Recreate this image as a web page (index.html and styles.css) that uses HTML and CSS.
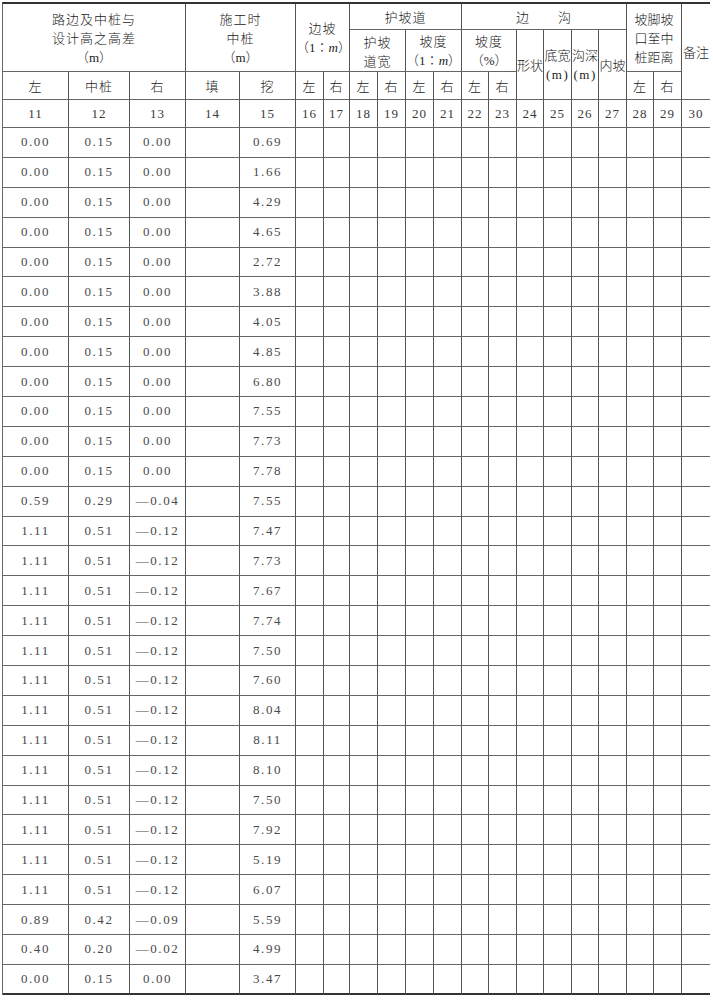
FILE: index.html
```html
<!DOCTYPE html>
<html lang="zh-CN">
<head>
<meta charset="utf-8">
<title>路基设计表</title>
<link rel="stylesheet" href="styles.css">
</head>
<body>
<div class="page">
<table class="sheet">
<colgroup>
<col style="width:66px"><col style="width:61px"><col style="width:56px"><col style="width:54px"><col style="width:56px">
<col style="width:28px"><col style="width:26px"><col style="width:28px"><col style="width:28px"><col style="width:28px">
<col style="width:28px"><col style="width:27px"><col style="width:28px"><col style="width:27px"><col style="width:28px">
<col style="width:27px"><col style="width:28px"><col style="width:27px"><col style="width:28px"><col style="width:28px">
</colgroup>
<thead>
<tr class="ha">
<th rowspan="2" colspan="3">路边及中桩与<br>设计高之高差<br><span class="u">（m）</span></th>
<th rowspan="2" colspan="2">施工时<br>中桩<br><span class="u">（m）</span></th>
<th rowspan="2" colspan="2">边坡<br><span class="u">（1∶<i>m</i>）</span></th>
<th colspan="4">护坡道</th>
<th colspan="6">边　　沟</th>
<th rowspan="2" colspan="2" class="tight">坡脚坡<br>口至中<br>桩距离</th>
<th rowspan="3" class="tight end">备注</th>
</tr>
<tr class="hb">
<th colspan="2">护坡<br>道宽</th>
<th colspan="2">坡度<br><span class="u">（1∶<i>m</i>）</span></th>
<th colspan="2">坡度<br><span class="u">（%）</span></th>
<th rowspan="2" class="tight">形状</th>
<th rowspan="2" class="tight">底宽<br><span class="un">(m)</span></th>
<th rowspan="2" class="tight">沟深<br><span class="un">(m)</span></th>
<th rowspan="2" class="tight">内坡</th>
</tr>
<tr class="hc">
<th>左</th><th>中桩</th><th>右</th><th>填</th><th>挖</th>
<th>左</th><th>右</th><th>左</th><th>右</th><th>左</th><th>右</th><th>左</th><th>右</th>
<th>左</th><th>右</th>
</tr>
<tr class="num">
<td>11</td><td>12</td><td>13</td><td>14</td><td>15</td><td>16</td><td>17</td><td>18</td><td>19</td><td>20</td>
<td>21</td><td>22</td><td>23</td><td>24</td><td>25</td><td>26</td><td>27</td><td>28</td><td>29</td><td class="end">30</td>
</tr>
</thead>
<tbody>
<tr><td>0.00</td><td>0.15</td><td>0.00</td><td></td><td>0.69</td><td></td><td></td><td></td><td></td><td></td><td></td><td></td><td></td><td></td><td></td><td></td><td></td><td></td><td></td><td class="end"></td></tr>
<tr><td>0.00</td><td>0.15</td><td>0.00</td><td></td><td>1.66</td><td></td><td></td><td></td><td></td><td></td><td></td><td></td><td></td><td></td><td></td><td></td><td></td><td></td><td></td><td class="end"></td></tr>
<tr><td>0.00</td><td>0.15</td><td>0.00</td><td></td><td>4.29</td><td></td><td></td><td></td><td></td><td></td><td></td><td></td><td></td><td></td><td></td><td></td><td></td><td></td><td></td><td class="end"></td></tr>
<tr><td>0.00</td><td>0.15</td><td>0.00</td><td></td><td>4.65</td><td></td><td></td><td></td><td></td><td></td><td></td><td></td><td></td><td></td><td></td><td></td><td></td><td></td><td></td><td class="end"></td></tr>
<tr><td>0.00</td><td>0.15</td><td>0.00</td><td></td><td>2.72</td><td></td><td></td><td></td><td></td><td></td><td></td><td></td><td></td><td></td><td></td><td></td><td></td><td></td><td></td><td class="end"></td></tr>
<tr><td>0.00</td><td>0.15</td><td>0.00</td><td></td><td>3.88</td><td></td><td></td><td></td><td></td><td></td><td></td><td></td><td></td><td></td><td></td><td></td><td></td><td></td><td></td><td class="end"></td></tr>
<tr><td>0.00</td><td>0.15</td><td>0.00</td><td></td><td>4.05</td><td></td><td></td><td></td><td></td><td></td><td></td><td></td><td></td><td></td><td></td><td></td><td></td><td></td><td></td><td class="end"></td></tr>
<tr><td>0.00</td><td>0.15</td><td>0.00</td><td></td><td>4.85</td><td></td><td></td><td></td><td></td><td></td><td></td><td></td><td></td><td></td><td></td><td></td><td></td><td></td><td></td><td class="end"></td></tr>
<tr><td>0.00</td><td>0.15</td><td>0.00</td><td></td><td>6.80</td><td></td><td></td><td></td><td></td><td></td><td></td><td></td><td></td><td></td><td></td><td></td><td></td><td></td><td></td><td class="end"></td></tr>
<tr><td>0.00</td><td>0.15</td><td>0.00</td><td></td><td>7.55</td><td></td><td></td><td></td><td></td><td></td><td></td><td></td><td></td><td></td><td></td><td></td><td></td><td></td><td></td><td class="end"></td></tr>
<tr><td>0.00</td><td>0.15</td><td>0.00</td><td></td><td>7.73</td><td></td><td></td><td></td><td></td><td></td><td></td><td></td><td></td><td></td><td></td><td></td><td></td><td></td><td></td><td class="end"></td></tr>
<tr><td>0.00</td><td>0.15</td><td>0.00</td><td></td><td>7.78</td><td></td><td></td><td></td><td></td><td></td><td></td><td></td><td></td><td></td><td></td><td></td><td></td><td></td><td></td><td class="end"></td></tr>
<tr><td>0.59</td><td>0.29</td><td>—0.04</td><td></td><td>7.55</td><td></td><td></td><td></td><td></td><td></td><td></td><td></td><td></td><td></td><td></td><td></td><td></td><td></td><td></td><td class="end"></td></tr>
<tr><td>1.11</td><td>0.51</td><td>—0.12</td><td></td><td>7.47</td><td></td><td></td><td></td><td></td><td></td><td></td><td></td><td></td><td></td><td></td><td></td><td></td><td></td><td></td><td class="end"></td></tr>
<tr><td>1.11</td><td>0.51</td><td>—0.12</td><td></td><td>7.73</td><td></td><td></td><td></td><td></td><td></td><td></td><td></td><td></td><td></td><td></td><td></td><td></td><td></td><td></td><td class="end"></td></tr>
<tr><td>1.11</td><td>0.51</td><td>—0.12</td><td></td><td>7.67</td><td></td><td></td><td></td><td></td><td></td><td></td><td></td><td></td><td></td><td></td><td></td><td></td><td></td><td></td><td class="end"></td></tr>
<tr><td>1.11</td><td>0.51</td><td>—0.12</td><td></td><td>7.74</td><td></td><td></td><td></td><td></td><td></td><td></td><td></td><td></td><td></td><td></td><td></td><td></td><td></td><td></td><td class="end"></td></tr>
<tr><td>1.11</td><td>0.51</td><td>—0.12</td><td></td><td>7.50</td><td></td><td></td><td></td><td></td><td></td><td></td><td></td><td></td><td></td><td></td><td></td><td></td><td></td><td></td><td class="end"></td></tr>
<tr><td>1.11</td><td>0.51</td><td>—0.12</td><td></td><td>7.60</td><td></td><td></td><td></td><td></td><td></td><td></td><td></td><td></td><td></td><td></td><td></td><td></td><td></td><td></td><td class="end"></td></tr>
<tr><td>1.11</td><td>0.51</td><td>—0.12</td><td></td><td>8.04</td><td></td><td></td><td></td><td></td><td></td><td></td><td></td><td></td><td></td><td></td><td></td><td></td><td></td><td></td><td class="end"></td></tr>
<tr><td>1.11</td><td>0.51</td><td>—0.12</td><td></td><td>8.11</td><td></td><td></td><td></td><td></td><td></td><td></td><td></td><td></td><td></td><td></td><td></td><td></td><td></td><td></td><td class="end"></td></tr>
<tr><td>1.11</td><td>0.51</td><td>—0.12</td><td></td><td>8.10</td><td></td><td></td><td></td><td></td><td></td><td></td><td></td><td></td><td></td><td></td><td></td><td></td><td></td><td></td><td class="end"></td></tr>
<tr><td>1.11</td><td>0.51</td><td>—0.12</td><td></td><td>7.50</td><td></td><td></td><td></td><td></td><td></td><td></td><td></td><td></td><td></td><td></td><td></td><td></td><td></td><td></td><td class="end"></td></tr>
<tr><td>1.11</td><td>0.51</td><td>—0.12</td><td></td><td>7.92</td><td></td><td></td><td></td><td></td><td></td><td></td><td></td><td></td><td></td><td></td><td></td><td></td><td></td><td></td><td class="end"></td></tr>
<tr><td>1.11</td><td>0.51</td><td>—0.12</td><td></td><td>5.19</td><td></td><td></td><td></td><td></td><td></td><td></td><td></td><td></td><td></td><td></td><td></td><td></td><td></td><td></td><td class="end"></td></tr>
<tr><td>1.11</td><td>0.51</td><td>—0.12</td><td></td><td>6.07</td><td></td><td></td><td></td><td></td><td></td><td></td><td></td><td></td><td></td><td></td><td></td><td></td><td></td><td></td><td class="end"></td></tr>
<tr><td>0.89</td><td>0.42</td><td>—0.09</td><td></td><td>5.59</td><td></td><td></td><td></td><td></td><td></td><td></td><td></td><td></td><td></td><td></td><td></td><td></td><td></td><td></td><td class="end"></td></tr>
<tr><td>0.40</td><td>0.20</td><td>—0.02</td><td></td><td>4.99</td><td></td><td></td><td></td><td></td><td></td><td></td><td></td><td></td><td></td><td></td><td></td><td></td><td></td><td></td><td class="end"></td></tr>
<tr class="last"><td>0.00</td><td>0.15</td><td>0.00</td><td></td><td>3.47</td><td></td><td></td><td></td><td></td><td></td><td></td><td></td><td></td><td></td><td></td><td></td><td></td><td></td><td></td><td class="end"></td></tr>
</tbody>
</table>
</div>
</body>
</html>
```

FILE: styles.css
```css
html, body {
  margin: 0;
  padding: 0;
  background: #ffffff;
}

.page {
  padding: 2px 0 0 2px;
}

.sheet {
  table-layout: fixed;
  width: 707px;
  border-collapse: separate;
  border-spacing: 0;
  border-top: 2px solid #333;
  border-left: 1px solid #666;
  font-family: "Noto Sans CJK SC", "Noto Sans CJK JP", sans-serif;
  font-weight: 300;
  color: #222;
}

.sheet th,
.sheet td {
  box-sizing: border-box;
  padding: 0;
  border-right: 1px solid #555;
  border-bottom: 1px solid #666;
  text-align: center;
  vertical-align: middle;
  overflow: hidden;
  white-space: nowrap;
}

.sheet .end {
  border-right: none;
}

.sheet th {
  font-size: 13px;
  font-weight: 300;
  line-height: 19px;
  letter-spacing: 1px;
}

.sheet th.tight {
  letter-spacing: 0;
}

.sheet .u {
  font-family: "Liberation Serif", "Noto Sans CJK SC", serif;
  font-size: 13px;
  letter-spacing: 0;
}

.sheet .un {
  font-family: "Liberation Serif", serif;
  font-size: 13px;
  letter-spacing: 1.5px;
}

.sheet .u i {
  font-style: italic;
}

.ha { height: 26px; }
.hb { height: 42px; }
.hc { height: 28px; }
.num { height: 28px; }

.sheet td {
  height: 29.9px;
  font-family: "Liberation Serif", "DejaVu Serif", serif;
  font-size: 13px;
  letter-spacing: 1.6px;
  color: #4a4a4a;
}

.num td {
  height: 28px;
  letter-spacing: 1px;
  color: #3a3a3a;
}

.sheet .last td {
  border-bottom: 2px solid #333;
}
```
